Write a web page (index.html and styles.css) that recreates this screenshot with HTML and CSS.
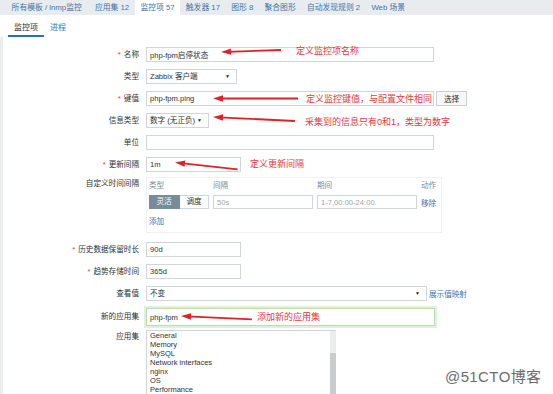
FILE: index.html
```html
<!DOCTYPE html>
<html lang="zh-CN">
  <head>
    <meta charset="UTF-8" />
    <meta name="viewport" content="width=device-width, initial-scale=1.0" />
    <title>监控项</title>
    <link rel="stylesheet" href="styles.css">
  </head>
  <body>
    <div class="page">
      <nav class="crumbs">
        <a href="#" class="first">所有模板 / lnmp监控</a>
        <a href="#">应用集 12</a>
        <a href="#" class="current">监控项 57</a>
        <a href="#">触发器 17</a>
        <a href="#">图形 8</a>
        <a href="#">聚合图形</a>
        <a href="#">自动发现规则 2</a>
        <a href="#">Web 场景</a>
      </nav>

      <div class="panel">
        <ul class="tabs">
          <li class="active">监控项</li>
          <li><a href="#">进程</a></li>
        </ul>

        <form class="item-form">
          <div class="row">
            <label class="req">名称</label>
            <input class="field w-full" type="text" value="php-fpm启停状态">
          </div>
          <div class="row">
            <label>类型</label>
            <div class="field select w-type"><span>Zabbix 客户端</span><i>▼</i></div>
          </div>
          <div class="row">
            <label class="req">键值</label>
            <input class="field w-full" type="text" value="php-fpm.ping">
            <button type="button" class="btn">选择</button>
          </div>
          <div class="row">
            <label>信息类型</label>
            <div class="field select w-info"><span>数字 (无正负)</span><i>▼</i></div>
          </div>
          <div class="row">
            <label>单位</label>
            <input class="field w-full" type="text" value="">
          </div>
          <div class="row before-table">
            <label class="req">更新间隔</label>
            <input class="field w-short" type="text" value="1m">
          </div>
          <div class="row top after-table">
            <label>自定义时间间隔</label>
            <div class="intervals">
              <div class="intervals-grid">
                <span class="head">类型</span>
                <span class="head">间隔</span>
                <span class="head">期间</span>
                <span class="head">动作</span>
                <div class="seg"><span class="on">灵活</span><span>调度</span></div>
                <input class="field cell" type="text" placeholder="50s">
                <input class="field cell" type="text" placeholder="1-7,00:00-24:00.">
                <a href="#" class="link">移除</a>
              </div>
              <a href="#" class="link add">添加</a>
            </div>
          </div>
          <div class="row">
            <label class="req">历史数据保留时长</label>
            <input class="field w-short" type="text" value="90d">
          </div>
          <div class="row">
            <label class="req">趋势存储时间</label>
            <input class="field w-short" type="text" value="365d">
          </div>
          <div class="row">
            <label>查看值</label>
            <div class="field select w-view"><span>不变</span><i>▼</i></div>
            <a href="#" class="link map">展示值映射</a>
          </div>
          <div class="row tight">
            <label>新的应用集</label>
            <input class="field w-new focus" type="text" value="php-fpm">
          </div>
          <div class="row top">
            <label>应用集</label>
            <div class="listbox">
              <ul class="opts">
                <li>General</li>
                <li>Memory</li>
                <li>MySQL</li>
                <li>Network interfaces</li>
                <li>nginx</li>
                <li>OS</li>
                <li>Performance</li>
              </ul>
              <div class="scroll"><span class="track"></span><span class="thumb"></span></div>
            </div>
          </div>
        </form>
      </div>

      <!-- 标注 -->
      <svg class="arrows" width="553" height="394" viewBox="0 0 553 394">
        <g transform="translate(221 52) rotate(-1.9)">
          <line x1="6" y1="0" x2="60" y2="0" />
          <polygon points="0,0 10,-3.2 10,3.2" />
        </g>
        <g transform="translate(213 98.5) rotate(0)">
          <line x1="6" y1="0" x2="85" y2="0" />
          <polygon points="0,0 10,-3.2 10,3.2" />
        </g>
        <g transform="translate(213 117) rotate(2.8)">
          <line x1="6" y1="0" x2="82" y2="0" />
          <polygon points="0,0 10,-3.2 10,3.2" />
        </g>
        <g transform="translate(175 162.5) rotate(6.3)">
          <line x1="6" y1="0" x2="63" y2="0" />
          <polygon points="0,0 10,-3.2 10,3.2" />
        </g>
        <g transform="translate(181 316) rotate(2.8)">
          <line x1="6" y1="0" x2="71" y2="0" />
          <polygon points="0,0 10,-3.2 10,3.2" />
        </g>
      </svg>
      <span class="note n-name">定义监控项名称</span>
      <span class="note n-key">定义监控键值，与配置文件相同</span>
      <span class="note n-type">采集到的信息只有0和1，类型为数字</span>
      <span class="note n-delay">定义更新间隔</span>
      <span class="note n-app">添加新的应用集</span>

      <span class="watermark">@51CTO博客</span>
    </div>
  </body>
</html>
```

FILE: styles.css
```css
body {
  margin: 0;
  font-family: 'Liberation Sans', 'Noto Sans CJK SC', sans-serif;
  font-size: 7.6px;
  color: #2b3338;
  background-color: #fff;
  overflow: hidden;
}
.page {
  position: relative;
  width: 553px;
  height: 394px;
  overflow: hidden;
}
.crumbs {
  display: flex;
  height: 15px;
  background-color: #e9ecef;
  padding-left: 6px;
  font-size: 7.8px;
}
.crumbs a {
  padding: 0 5.6px;
  line-height: 15px;
  color: #3d74aa;
  text-decoration: none;
}
.crumbs a.first {
  margin-right: 2px;
}
.crumbs a.current {
  background-color: #fff;
}
.panel {
  background-color: #fff;
}
.tabs {
  display: flex;
  margin: 0;
  padding: 0 0 0 8px;
  list-style: none;
  font-size: 8px;
}
.tabs li {
  padding: 6px 6px 0;
  line-height: 14px;
  border-bottom: 2px solid transparent;
}
.tabs li.active {
  border-color: #2a6fb1;
  color: #2b3338;
}
.tabs a,
.link {
  color: #3d74aa;
  text-decoration: none;
}
.item-form {
  border-left: 3px solid #eaedef;
  padding-top: 10px;
}
.row {
  display: flex;
  align-items: center;
  margin-bottom: 7px;
}
.row.top {
  align-items: flex-start;
}
.row.before-table {
  margin-bottom: 5px;
}
.row.after-table {
  margin-bottom: 9px;
}
.row.tight {
  margin-bottom: 4px;
}
.row label {
  flex: none;
  width: 136px;
  margin-right: 7px;
  text-align: right;
  line-height: 14px;
}
.row label.req::before {
  content: '*';
  color: #e33b3b;
  margin-right: 3px;
}
.field {
  box-sizing: border-box;
  height: 15px;
  margin: 0;
  padding: 0 3px;
  border: 1px solid #cfd5d9;
  background-color: #fff;
  font-family: inherit;
  font-size: 7.6px;
  line-height: 13px;
  color: #2b3338;
  outline: none;
}
.field::placeholder {
  color: #9aa5ab;
}
.w-full { width: 288px; }
.w-short { width: 95px; }
.w-type { width: 91px; }
.w-info { width: 63px; }
.w-view { width: 281px; }
.w-new { width: 289px; }
.select {
  display: flex;
  align-items: center;
  justify-content: space-between;
}
.select i {
  font-style: normal;
  font-size: 5px;
  margin-right: 3px;
  color: #222;
}
.btn {
  box-sizing: border-box;
  height: 15px;
  width: 31px;
  margin-left: 2px;
  padding: 0;
  border: 1px solid #c9cfd3;
  background-color: #f7f7f7;
  font-family: inherit;
  font-size: 7.6px;
  color: #2b3338;
}
.intervals {
  box-sizing: border-box;
  width: 296px;
  border: 1px solid #eef0f2;
  padding: 1px 2px 3px;
}
.intervals-grid {
  display: grid;
  grid-template-columns: 60px 100px 100px 1fr;
  column-gap: 4px;
  row-gap: 2px;
  align-items: center;
}
.intervals .head {
  line-height: 14px;
  color: #7e8b94;
}
.seg {
  display: flex;
  height: 14px;
}
.seg span {
  box-sizing: border-box;
  width: 29px;
  line-height: 12px;
  text-align: center;
  border: 1px solid #cfd5d9;
  border-left: none;
}
.seg span.on {
  width: 31px;
  background-color: #768d99;
  border-color: #768d99;
  color: #fff;
}
.cell {
  width: 100px;
  height: 14px;
  line-height: 12px;
}
.add {
  display: block;
  margin-top: 6px;
  line-height: 14px;
  width: 20px;
}
.map {
  margin-left: 2px;
}
.field.focus {
  height: 18px;
  line-height: 16px;
  border-color: #b9dcb3;
  box-shadow: 0 0 0 2px #e1f0de;
}
.listbox {
  display: flex;
  box-sizing: border-box;
  width: 190px;
  height: 80px;
  border: 1px solid #cfd5d9;
  border-right: none;
}
.opts {
  flex: 1;
  margin: 0;
  padding: 0 0 0 3px;
  list-style: none;
  font-size: 7.5px;
  line-height: 9px;
}
.scroll {
  display: flex;
  flex-direction: column;
  width: 6px;
}
.scroll .track {
  height: 22px;
  background-color: #ebedee;
}
.scroll .thumb {
  flex: 1;
  background-color: #c6ccd0;
}
.arrows {
  position: absolute;
  left: 0;
  top: 0;
  pointer-events: none;
}
.arrows line {
  stroke: #dd2228;
  stroke-width: 1.8;
}
.arrows polygon {
  fill: #dd2228;
}
.note {
  position: absolute;
  font-size: 9px;
  line-height: 10px;
  color: #e2393b;
  white-space: nowrap;
}
.n-name { left: 296px; top: 46px; }
.n-key { left: 306px; top: 94px; }
.n-type { left: 305px; top: 117px; }
.n-delay { left: 250px; top: 159px; }
.n-app { left: 257px; top: 312px; }
.watermark {
  position: absolute;
  left: 445px;
  top: 368px;
  font-size: 15px;
  line-height: 17px;
  letter-spacing: 0.4px;
  color: #6d6d6d;
  text-shadow: 0 0 2px #fff;
}
```
